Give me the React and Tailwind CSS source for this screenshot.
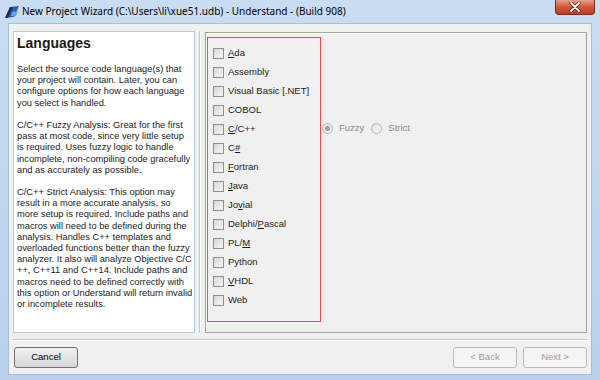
import React from 'react'

const font = { fontFamily: '"Liberation Sans", Arial, sans-serif' }

const languages = [
  { pre: '', u: 'A', post: 'da' },
  { pre: 'Assembly', u: '', post: '' },
  { pre: 'Visual Basic [.NET]', u: '', post: '' },
  { pre: 'COBOL', u: '', post: '' },
  { pre: '', u: 'C', post: '/C++' },
  { pre: 'C', u: '#', post: '' },
  { pre: '', u: 'F', post: 'ortran' },
  { pre: '', u: 'J', post: 'ava' },
  { pre: 'Jo', u: 'v', post: 'ial' },
  { pre: 'Delphi/', u: 'P', post: 'ascal' },
  { pre: 'PL/', u: 'M', post: '' },
  { pre: 'Python', u: '', post: '' },
  { pre: '', u: 'V', post: 'HDL' },
  { pre: 'Web', u: '', post: '' },
]

const para1 = [
  'Select the source code language(s) that',
  'your project will contain. Later, you can',
  'configure options for how each language',
  'you select is handled.',
]
const para2 = [
  'C/C++ Fuzzy Analysis: Great for the first',
  'pass at most code, since very little setup',
  'is required. Uses fuzzy logic to handle',
  'incomplete, non-compiling code gracefully',
  'and as accurately as possible.',
]
const para3 = [
  'C/C++ Strict Analysis: This option may',
  'result in a more accurate analysis, so',
  'more setup is required. Include paths and',
  'macros will need to be defined during the',
  'analysis. Handles C++ templates and',
  'overloaded functions better than the fuzzy',
  'analyzer. It also will analyze Objective C/C',
  '++, C++11 and C++14. Include paths and',
  'macros need to be defined correctly with',
  'this option or Understand will return invalid',
  'or incomplete results.',
]

function Para({ lines }) {
  return (
    <div className="mb-[11.2px]">
      {lines.map((l) => (
        <div key={l} className="whitespace-nowrap h-[11.2px] leading-[11.2px]">{l}</div>
      ))}
    </div>
  )
}

function Checkbox() {
  return (
    <div className="w-[11px] h-[11px] border border-[#8e8f8f] bg-gradient-to-br from-[#d8d8d8] to-[#f6f6f6] shrink-0" />
  )
}

function Radio({ checked }) {
  return (
    <div className="w-[11px] h-[11px] rounded-full border border-[#b3b3b3] bg-gradient-to-br from-[#e2e2e2] to-[#fafafa] flex items-center justify-center shrink-0">
      {checked && <div className="w-[5px] h-[5px] rounded-full bg-[#9c9c9c]" />}
    </div>
  )
}

function Button({ children, primary }) {
  return (
    <div
      className={
        'w-[64px] h-[21px] rounded-[3px] flex items-center justify-center text-[9.5px] ' +
        (primary
          ? 'border border-[#707070] bg-gradient-to-b from-[#f2f2f2] to-[#d6d6d6] text-black'
          : 'border border-[#b9bdc0] bg-[#f4f4f4] text-[#9c9c9c]')
      }
    >
      {children}
    </div>
  )
}

export default function App() {
  return (
    <div className="w-[600px] h-[380px] bg-gradient-to-b from-[#c9ddf2] to-[#b8d0ea] flex flex-col overflow-hidden" style={font}>
      {/* title bar */}
      <div className="h-[23px] flex items-center relative shrink-0">
        <svg width="16" height="16" viewBox="0 0 16 16" className="ml-[4px] mt-[1px]">
          <path d="M1 14 L6 3 L15 2 L10 13 Z" fill="#2a5fb0" />
          <path d="M1 14 L6 3 L9 3 L4 14 Z" fill="#1c2c54" />
          <path d="M8 8 L14 7 L12 12 L7 12 Z" fill="#6fa0e0" />
        </svg>
        <span className="ml-[2px] text-[10px] text-black whitespace-nowrap" style={{ fontFamily: '"Noto Sans", "Liberation Sans", sans-serif' }}>
          New Project Wizard (C:\Users\li\xue51.udb) - Understand - (Build 908)
        </span>
        <div className="absolute right-[5px] top-0 w-[40px] h-[15px] rounded-b-[4px] border border-t-0 border-[#7a2a20] bg-gradient-to-b from-[#e5a08f] via-[#d0573d] to-[#c23a22] flex items-center justify-center">
          <svg width="12" height="10" viewBox="0 0 12 10">
            <path d="M2 1 L10 9 M10 1 L2 9" stroke="#5a1a12" strokeWidth="3.2" strokeLinecap="round" />
            <path d="M2 1 L10 9 M10 1 L2 9" stroke="#ffffff" strokeWidth="1.8" strokeLinecap="round" />
          </svg>
        </div>
      </div>

      {/* client area */}
      <div className="mx-[8px] mb-[5px] flex-1 bg-[#f0f0f0] border border-[#a9bdd3] flex flex-col px-[4px] pt-[7px]">
        <div className="flex h-[302px]">
          {/* left panel */}
          <div className="w-[182px] bg-white border border-[#b4cbe4] pl-[3px] pt-[3px] text-[#1b1b1b] text-[9.3px]">
            <div className="font-bold text-[14px] leading-[17px] mb-[12px]">Languages</div>
            <Para lines={para1} />
            <Para lines={para2} />
            <Para lines={para3} />
          </div>
          {/* separator */}
          <div className="w-[2px] ml-[4px] mr-[4px] border-l border-[#c6c6c6] bg-white h-full" />
          {/* right panel */}
          <div className="flex-1 border border-[#a3a3a3] shadow-[inset_1px_1px_0_#ffffff] mt-[1px] pl-[1px] pt-[4px] flex">
            <div className="w-[114px] h-[285px] border border-[#ea4a4a] pl-[5px] pt-[6px] flex flex-col">
              {languages.map((l, i) => (
                <div key={i} className="h-[19px] flex items-center gap-[4px] text-[9.5px] text-[#1b1b1b] whitespace-nowrap">
                  <Checkbox />
                  <span>
                    {l.pre}
                    {l.u && <u className="underline-offset-[1px]">{l.u}</u>}
                    {l.post}
                  </span>
                </div>
              ))}
            </div>
            <div className="ml-[1px] mt-[82px] h-[19px] flex items-center text-[9.5px] text-[#8a8a8a]">
              <Radio checked />
              <span className="ml-[6px]">Fuzzy</span>
              <span className="ml-[7px]"><Radio /></span>
              <span className="ml-[6px]">Strict</span>
            </div>
          </div>
        </div>
        {/* bottom separator */}
        <div className="mt-[6px] h-[2px] border-t border-[#c8c8c8] bg-white" />
        <div className="flex mt-[6px] items-center">
          <div className="ml-[1px]">
            <Button primary>Cancel</Button>
          </div>
          <div className="flex-1" />
          <Button>&lt; Back</Button>
          <div className="w-[6px]" />
          <Button>Next &gt;</Button>
        </div>
      </div>
    </div>
  )
}
